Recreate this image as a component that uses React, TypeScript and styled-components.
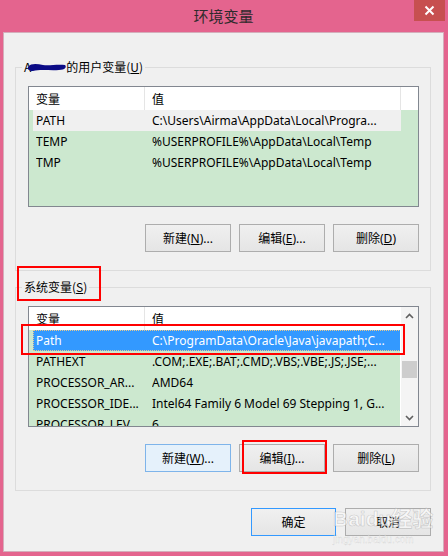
import React from 'react';
import styled, { createGlobalStyle } from 'styled-components';

type Variable = {
  name: string;
  value: string;
  state?: 'selected' | 'inactive';
};

type ButtonKind = 'normal' | 'hover' | 'default';

const userVars: Variable[] = [
  { name: 'PATH', value: 'C:\\Users\\Airma\\AppData\\Local\\Progra...', state: 'inactive' },
  { name: 'TEMP', value: '%USERPROFILE%\\AppData\\Local\\Temp' },
  { name: 'TMP', value: '%USERPROFILE%\\AppData\\Local\\Temp' },
];

const systemVars: Variable[] = [
  { name: 'Path', value: 'C:\\ProgramData\\Oracle\\Java\\javapath;C...', state: 'selected' },
  { name: 'PATHEXT', value: '.COM;.EXE;.BAT;.CMD;.VBS;.VBE;.JS;.JSE;...' },
  { name: 'PROCESSOR_AR...', value: 'AMD64' },
  { name: 'PROCESSOR_IDE...', value: 'Intel64 Family 6 Model 69 Stepping 1, G...' },
  { name: 'PROCESSOR_LEV...', value: '6' },
];

const GlobalStyle = createGlobalStyle`
  html, body {
    margin: 0;
    padding: 0;
    background: #e4648e;
  }
  body {
    font-family: "Noto Sans", "Noto Sans CJK SC", sans-serif;
    font-size: 12px;
    color: #000;
  }
`;

const Chevron: React.FC<{ up?: boolean }> = ({ up }) => (
  <svg width="9" height="6" viewBox="0 0 9 6">
    <polyline
      points={up ? '1,5 4.5,1.5 8,5' : '1,1 4.5,4.5 8,1'}
      fill="none"
      stroke="#606060"
      strokeWidth="1.6"
    />
  </svg>
);

const VarList: React.FC<{ rows: Variable[]; scroll?: boolean; mark?: boolean }> = ({ rows, scroll, mark }) => (
  <ListBox>
    <Viewport>
      <HeaderRow>
        <HeaderCell width={116}>变量</HeaderCell>
        <HeaderCell width={scroll ? undefined : 256}>值</HeaderCell>
        {!scroll && <HeaderCell />}
      </HeaderRow>
      {rows.map((row) => (
        <Row key={row.name} state={row.state}>
          <Cell>{row.name}</Cell>
          <Cell>{row.value}</Cell>
        </Row>
      ))}
    </Viewport>
    {scroll && (
      <ScrollBar>
        <ScrollArrow><Chevron up /></ScrollArrow>
        <ScrollTrack>
          <ScrollThumb />
        </ScrollTrack>
        <ScrollArrow><Chevron /></ScrollArrow>
      </ScrollBar>
    )}
    {mark && <Annotation top={17} left={-8} width={384} height={31} />}
  </ListBox>
);

const App: React.FC = () => {
  return (
    <>
      <GlobalStyle />
      <Window>
        <TitleBar>
          <span />
          <Title>环境变量</Title>
          <CloseButton>
            <svg width="11" height="11" viewBox="0 0 11 11">
              <path d="M1.5 1.5 L9.5 9.5 M9.5 1.5 L1.5 9.5" stroke="#fff" strokeWidth="2" />
            </svg>
          </CloseButton>
        </TitleBar>

        <Client>
          <Group>
            <Legend>
              <span>A</span>
              <Redaction width="40" height="12" viewBox="0 0 40 12">
                <path
                  d="M1 6 C4 2, 10 3, 16 4 C22 5, 30 3, 38 4 C40 6, 38 9, 32 9 C24 10, 14 8, 6 10 C2 10, 0 8, 1 6 Z"
                  fill="#0b0b86"
                />
              </Redaction>
              的用户变量(<u>U</u>)
            </Legend>
            <VarList rows={userVars} />
            <ButtonRow>
              <Button kind="normal">新建(<u>N</u>)...</Button>
              <Button kind="normal">编辑(<u>E</u>)...</Button>
              <Button kind="normal">删除(<u>D</u>)</Button>
            </ButtonRow>
          </Group>

          <Group>
            <Legend>
              系统变量(<u>S</u>)
              <Annotation top={-13} left={-5} width={84} height={35} />
            </Legend>
            <VarList rows={systemVars} scroll mark />
            <ButtonRow>
              <Button kind="hover">新建(<u>W</u>)...</Button>
              <Marked>
                <Button kind="normal">编辑(<u>I</u>)...</Button>
                <Annotation top={-4} left={3} width={85} height={34} />
              </Marked>
              <Button kind="normal">删除(<u>L</u>)</Button>
            </ButtonRow>
          </Group>

          <Footer>
            <Button kind="default" narrow>确定</Button>
            <Marked>
              <Button kind="normal">取消</Button>
              <Watermark>
                <WatermarkBrand>Baidu经验</WatermarkBrand>
                <WatermarkUrl>jingyan.baidu.com</WatermarkUrl>
              </Watermark>
            </Marked>
          </Footer>
        </Client>
      </Window>
    </>
  );
};

const Window = styled.div`
  width: 448px;
  height: 556px;
  box-sizing: border-box;
  padding: 0 4px 4px 3px;
  background: #e4648e;
  display: flex;
  flex-direction: column;
`;

const TitleBar = styled.div`
  height: 32px;
  display: grid;
  grid-template-columns: 1fr auto 1fr;
  align-items: start;
`;

const Title = styled.div`
  font-family: "Noto Sans CJK SC", sans-serif;
  font-size: 15px;
  line-height: 32px;
  color: #2e2a2c;
`;

const CloseButton = styled.div`
  justify-self: end;
  margin-right: -1px;
  width: 31px;
  height: 21px;
  background: #c75050;
  display: flex;
  align-items: center;
  justify-content: center;
`;

const Client = styled.div`
  flex: 1;
  background: #f0f0f0;
  box-shadow: inset 0 0 0 1px #d4aebb;
  padding: 27px 13px 0 12px;
  display: flex;
  flex-direction: column;
  gap: 8px;
`;

const Group = styled.fieldset`
  margin: 0;
  padding: 0 11px 18px 12px;
  border: 1px solid #dcdcdc;
  min-width: 0;
  display: flex;
  flex-direction: column;
`;

const Legend = styled.legend`
  position: relative;
  margin-left: -6px;
  padding: 0 2px;
  font-family: "Noto Sans CJK SC", sans-serif;
  font-size: 12px;
  line-height: 16px;
  display: flex;
  align-items: center;
  white-space: nowrap;
`;

const Redaction = styled.svg`
  margin-left: -4px;
  margin-right: -1px;
`;

const ListBox = styled.div`
  position: relative;
  margin-top: 11px;
  height: 121px;
  box-sizing: border-box;
  border: 1px solid #828790;
  background: #cce8cf;
  display: flex;
`;

const Viewport = styled.div`
  flex: 1;
  min-width: 0;
  overflow: hidden;
`;

const HeaderRow = styled.div`
  height: 23px;
  background: #fff;
  display: flex;
`;

const HeaderCell = styled.div<{ width?: number }>`
  ${({ width }) => (width ? `width: ${width}px;` : 'flex: 1;')}
  box-sizing: border-box;
  padding-left: 7px;
  border-right: 1px solid #e5e5e5;
  font-family: "Noto Sans CJK SC", sans-serif;
  line-height: 23px;
  &:last-child {
    border-right: none;
  }
`;

const Row = styled.div<{ state?: 'selected' | 'inactive' }>`
  margin-left: 4px;
  width: 368px;
  height: 21px;
  box-sizing: border-box;
  padding-left: 3px;
  display: grid;
  grid-template-columns: 116px 1fr;
  line-height: 21px;
  background: ${({ state }) =>
    state === 'selected' ? '#3399ff' : state === 'inactive' ? '#f0f0f0' : 'transparent'};
  color: ${({ state }) => (state === 'selected' ? '#fff' : '#000')};
  outline: ${({ state }) => (state === 'selected' ? '1px dotted #e8c88a' : 'none')};
  outline-offset: -1px;
`;

const Cell = styled.div`
  white-space: nowrap;
  overflow: hidden;
`;

const ScrollBar = styled.div`
  width: 17px;
  background: #f4f4f4;
  border-left: 1px solid #fff;
  display: flex;
  flex-direction: column;
`;

const ScrollArrow = styled.div`
  height: 17px;
  display: flex;
  align-items: center;
  justify-content: center;
`;

const ScrollTrack = styled.div`
  flex: 1;
  padding-top: 37px;
`;

const ScrollThumb = styled.div`
  margin: 0 1px;
  height: 17px;
  background: #cdcdcd;
`;

const ButtonRow = styled.div`
  margin-top: 17px;
  display: flex;
  justify-content: flex-end;
  gap: 8px;
`;

const Footer = styled.div`
  margin-top: 9px;
  display: flex;
  justify-content: flex-end;
  gap: 9px;
`;

const Button = styled.div<{ kind: ButtonKind; narrow?: boolean }>`
  width: ${({ narrow }) => (narrow ? 85 : 86)}px;
  height: 28px;
  box-sizing: border-box;
  display: flex;
  align-items: center;
  justify-content: center;
  font-family: "Noto Sans", "Noto Sans CJK SC", sans-serif;
  font-size: 12px;
  border: 1px solid
    ${({ kind }) => (kind === 'hover' ? '#7eb4ea' : kind === 'default' ? '#3399ff' : '#adadad')};
  background: ${({ kind }) =>
    kind === 'hover' ? '#e5f1fb' : 'linear-gradient(#f0f0f0, #e5e5e5)'};
`;

const Marked = styled.div`
  position: relative;
`;

const Annotation = styled.div<{ top: number; left: number; width: number; height: number }>`
  position: absolute;
  top: ${({ top }) => top}px;
  left: ${({ left }) => left}px;
  width: ${({ width }) => width}px;
  height: ${({ height }) => height}px;
  box-sizing: border-box;
  border: 2px solid #ff0000;
  pointer-events: none;
`;

const Watermark = styled.div`
  position: absolute;
  top: -4px;
  left: -12px;
  display: flex;
  flex-direction: column;
  align-items: flex-start;
  white-space: nowrap;
  pointer-events: none;
`;

const WatermarkBrand = styled.span`
  font-family: "Liberation Sans", "Noto Sans CJK SC", sans-serif;
  font-size: 21px;
  font-weight: bold;
  line-height: 30px;
  color: rgba(255, 255, 255, 0.55);
  -webkit-text-stroke: 0.6px rgba(150, 150, 150, 0.45);
`;

const WatermarkUrl = styled.span`
  font-family: "Liberation Sans", sans-serif;
  font-size: 10px;
  line-height: 12px;
  color: rgba(255, 255, 255, 0.6);
  -webkit-text-stroke: 0.3px rgba(150, 150, 150, 0.4);
`;

export default App;
